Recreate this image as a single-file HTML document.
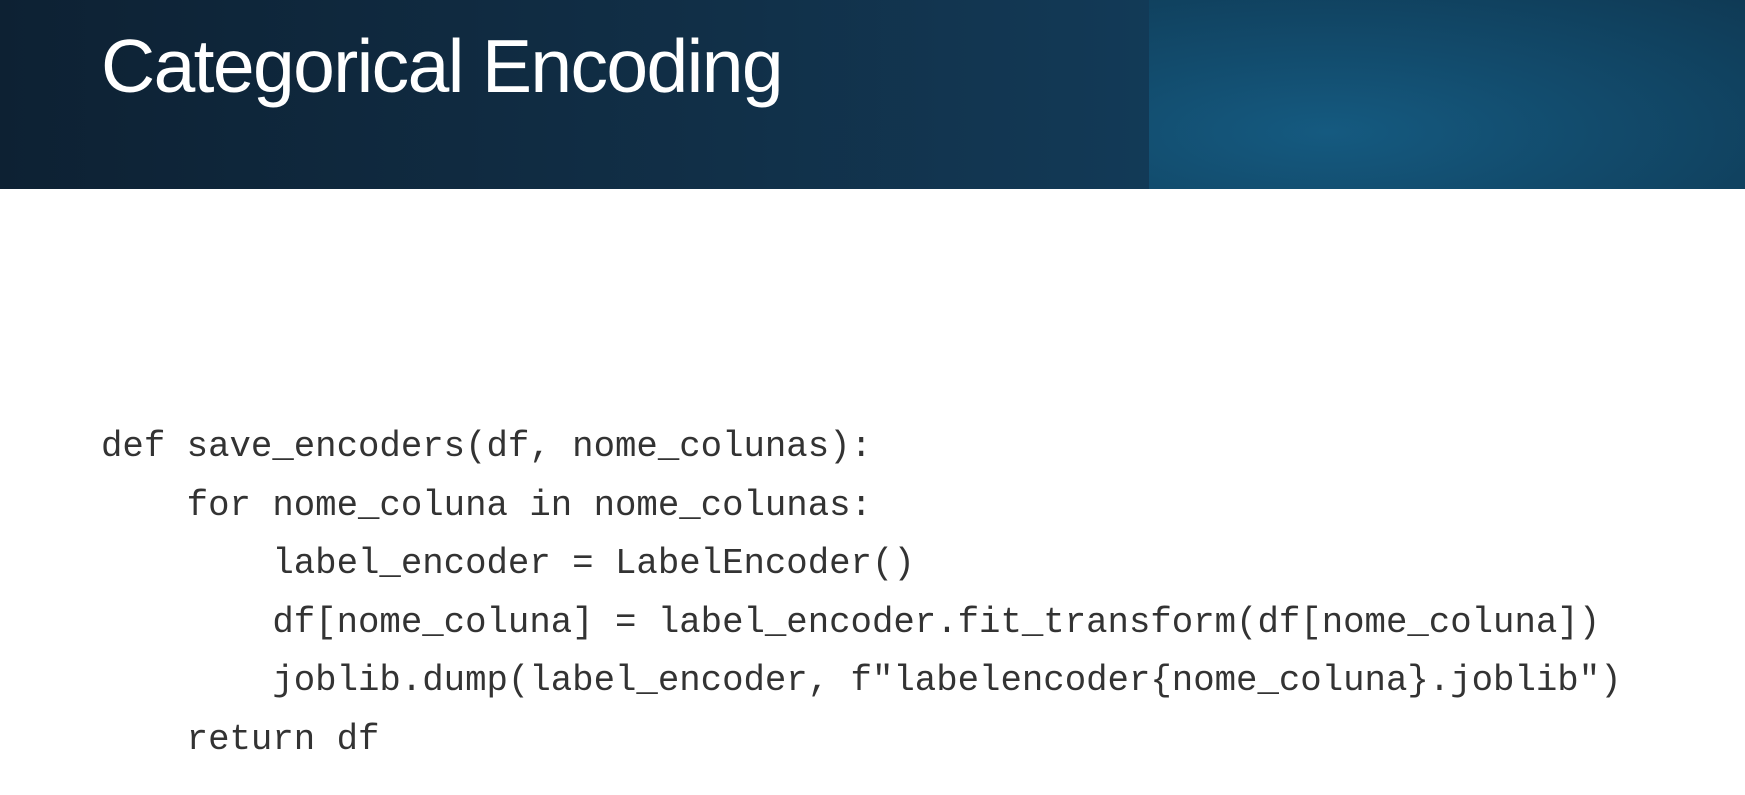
<!DOCTYPE html>
<html><head><style>
body{margin:0;width:1745px;height:795px;background:#fff;overflow:hidden;position:relative}
.hdr{position:absolute;left:0;top:0;width:1745px;height:189px;background:linear-gradient(90deg,#0d2133 0%,#112f47 40%,#123a57 66%);}
.rp{position:absolute;left:1149px;top:0;width:596px;height:189px;background:radial-gradient(ellipse at 30% 70%,#155a80 0%,#124b6c 45%,#0f3a55 100%);}
h1{position:absolute;left:101px;top:23px;margin:0;font:75px "Liberation Sans",sans-serif;letter-spacing:-1.6px;color:#fff;font-weight:normal}
pre{position:absolute;left:101px;top:418px;margin:0;font:35.7px/58.5px "Liberation Mono",monospace;color:#333}
</style></head><body>
<div class="hdr"></div><div class="rp"></div>
<h1>Categorical Encoding</h1>
<pre>def save_encoders(df, nome_colunas):
    for nome_coluna in nome_colunas:
        label_encoder = LabelEncoder()
        df[nome_coluna] = label_encoder.fit_transform(df[nome_coluna])
        joblib.dump(label_encoder, f"labelencoder{nome_coluna}.joblib")
    return df</pre>
</body></html>
